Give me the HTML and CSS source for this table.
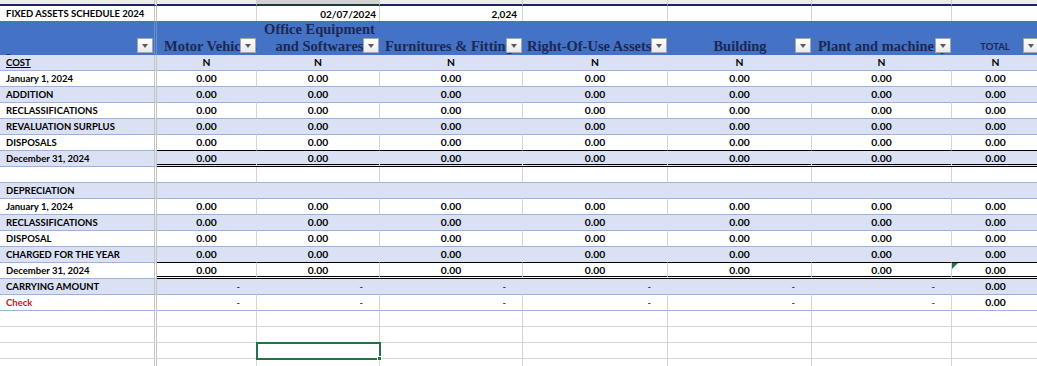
FILE: index.html
```html
<!DOCTYPE html>
<html>
<head>
<meta charset="utf-8">
<link rel="stylesheet" href="styles.css">
</head>
<body>
<div class="sheet">
  <div class="row strip">
    <div class="c"></div><div class="c"></div><div class="c sel-col"></div><div class="c"></div><div class="c"></div><div class="c"></div><div class="c"></div><div class="c"></div>
  </div>
  <div class="row titlerow">
    <div class="c lbl">FIXED ASSETS SCHEDULE 2024</div><div class="c"></div><div class="c r">02/07/2024</div><div class="c r r5">2,024</div><div class="c"></div><div class="c"></div><div class="c"></div><div class="c"></div>
  </div>
  <div class="row head">
    <div class="h hA"><span class="us">_</span><span class="dd"></span></div>
    <div class="h"><span class="ht">Motor Vehicles</span><span class="dd"></span></div>
    <div class="h hC"><span class="ht2">Office Equipment<br>and Softwares</span><span class="dd"></span></div>
    <div class="h"><span class="ht">Furnitures &amp; Fittings</span><span class="dd"></span></div>
    <div class="h hE"><span class="ht">Right-Of-Use Assets</span><span class="dd"></span></div>
    <div class="h hF"><span class="ht ctr">Building</span><span class="dd"></span></div>
    <div class="h"><span class="ht">Plant and machinery</span><span class="dd"></span></div>
    <div class="h hH"><span class="tot">TOTAL</span><span class="dd"></span></div>
  </div>

  <div class="row band"><div class="c lbl"><u>COST</u></div><div class="c n">N</div><div class="c n">N</div><div class="c n">N</div><div class="c n">N</div><div class="c n">N</div><div class="c n">N</div><div class="c n">N</div></div>
  <div class="row white"><div class="c lbl">January 1, 2024</div><div class="c n">0.00</div><div class="c n">0.00</div><div class="c n">0.00</div><div class="c n">0.00</div><div class="c n">0.00</div><div class="c n">0.00</div><div class="c n">0.00</div></div>
  <div class="row band"><div class="c lbl">ADDITION</div><div class="c n">0.00</div><div class="c n">0.00</div><div class="c n">0.00</div><div class="c n">0.00</div><div class="c n">0.00</div><div class="c n">0.00</div><div class="c n">0.00</div></div>
  <div class="row white"><div class="c lbl">RECLASSIFICATIONS</div><div class="c n">0.00</div><div class="c n">0.00</div><div class="c n">0.00</div><div class="c n">0.00</div><div class="c n">0.00</div><div class="c n">0.00</div><div class="c n">0.00</div></div>
  <div class="row band"><div class="c lbl">REVALUATION SURPLUS</div><div class="c n">0.00</div><div class="c n">0.00</div><div class="c n">0.00</div><div class="c n">0.00</div><div class="c n">0.00</div><div class="c n">0.00</div><div class="c n">0.00</div></div>
  <div class="row white pre-total"><div class="c lbl">DISPOSALS</div><div class="c n">0.00</div><div class="c n">0.00</div><div class="c n">0.00</div><div class="c n">0.00</div><div class="c n">0.00</div><div class="c n">0.00</div><div class="c n">0.00</div></div>
  <div class="row band total"><div class="c lbl">December 31, 2024</div><div class="c n">0.00</div><div class="c n">0.00</div><div class="c n">0.00</div><div class="c n">0.00</div><div class="c n">0.00</div><div class="c n">0.00</div><div class="c n">0.00</div></div>
  <div class="row white"><div class="c lbl"></div><div class="c"></div><div class="c"></div><div class="c"></div><div class="c"></div><div class="c"></div><div class="c"></div><div class="c"></div></div>

  <div class="row band"><div class="c lbl">DEPRECIATION</div><div class="c"></div><div class="c"></div><div class="c"></div><div class="c"></div><div class="c"></div><div class="c"></div><div class="c"></div></div>
  <div class="row white"><div class="c lbl">January 1, 2024</div><div class="c n">0.00</div><div class="c n">0.00</div><div class="c n">0.00</div><div class="c n">0.00</div><div class="c n">0.00</div><div class="c n">0.00</div><div class="c n">0.00</div></div>
  <div class="row band"><div class="c lbl">RECLASSIFICATIONS</div><div class="c n">0.00</div><div class="c n">0.00</div><div class="c n">0.00</div><div class="c n">0.00</div><div class="c n">0.00</div><div class="c n">0.00</div><div class="c n">0.00</div></div>
  <div class="row white"><div class="c lbl">DISPOSAL</div><div class="c n">0.00</div><div class="c n">0.00</div><div class="c n">0.00</div><div class="c n">0.00</div><div class="c n">0.00</div><div class="c n">0.00</div><div class="c n">0.00</div></div>
  <div class="row band pre-total"><div class="c lbl">CHARGED FOR THE YEAR</div><div class="c n">0.00</div><div class="c n">0.00</div><div class="c n">0.00</div><div class="c n">0.00</div><div class="c n">0.00</div><div class="c n">0.00</div><div class="c n">0.00</div></div>
  <div class="row white total"><div class="c lbl">December 31, 2024</div><div class="c n">0.00</div><div class="c n">0.00</div><div class="c n">0.00</div><div class="c n">0.00</div><div class="c n">0.00</div><div class="c n">0.00</div><div class="c n err">0.00<span class="tri"></span></div></div>
  <div class="row band"><div class="c lbl">CARRYING AMOUNT</div><div class="c d">-</div><div class="c d">-</div><div class="c d">-</div><div class="c d">-</div><div class="c d">-</div><div class="c d">-</div><div class="c n">0.00</div></div>
  <div class="row white"><div class="c lbl red">Check</div><div class="c d">-</div><div class="c d">-</div><div class="c d">-</div><div class="c d">-</div><div class="c d">-</div><div class="c d">-</div><div class="c n">0.00</div></div>

  <div class="row empty"><div class="c"></div><div class="c"></div><div class="c"></div><div class="c"></div><div class="c"></div><div class="c"></div><div class="c"></div><div class="c"></div></div>
  <div class="row empty"><div class="c"></div><div class="c"></div><div class="c"></div><div class="c"></div><div class="c"></div><div class="c"></div><div class="c"></div><div class="c"></div></div>
  <div class="row empty"><div class="c"></div><div class="c"></div><div class="c selected"><span class="handle"></span></div><div class="c"></div><div class="c"></div><div class="c"></div><div class="c"></div><div class="c"></div></div>
  <div class="row empty"><div class="c"></div><div class="c"></div><div class="c"></div><div class="c"></div><div class="c"></div><div class="c"></div><div class="c"></div><div class="c"></div></div>
</div>
</body>
</html>
```
FILE: styles.css
```css
* { box-sizing: border-box; }
html, body { margin: 0; padding: 0; background: #fff; }
body { width: 1037px; height: 366px; overflow: hidden; }

.sheet {
  width: 1040px;
  font-family: Lato, "Liberation Sans", sans-serif;
  font-weight: 700;
  font-size: 9.5px;
  color: #000;
}

.row {
  display: grid;
  grid-template-columns: 157px 100px 123px 143px 145px 144px 140px 88px;
  height: 16px;
}

.c {
  border-right: 1px solid #d4d4d4;
  border-bottom: 1px solid #9fb3da;
  white-space: nowrap;
  overflow: hidden;
  line-height: 15px;
  position: relative;
}
.row > .c:first-child { border-right: 3px double #c4c4c4; }

/* top strip */
.strip { height: 6px; }
.strip .c { background: #ececec; border-bottom: 2px solid #1e2460; border-right-color: #cfcfcf; }
.strip .sel-col { background: #d2d2d2; border-bottom-color: #1e3a40; }

.titlerow { height: 15px; }
.titlerow .c { border-bottom: none; line-height: 16px; }

.lbl { padding-left: 6px; }
.red { color: #d0121b; }
.r { text-align: right; padding-right: 3px; font-size: 10px; }
.r5 { padding-right: 5px; }
.n { text-align: center; font-size: 10.3px; }
.d { text-align: right; padding-right: 16px; font-weight: 400; }

.band .c { background: #d9e1f2; border-right-color: transparent; }
.band .c:first-child { border-right: 3px double #c4c4c4; }

.pre-total .c:not(:first-child) { border-bottom: 1px solid #000; }
.total .c:not(:first-child) { border-bottom: 3px double #000; line-height: 14px; }

.empty .c { border-bottom-color: #d4d4d4; }

/* header */
.head {
  height: 34px;
  background: #4472c4;
}
.h {
  position: relative;
  display: flex;
  align-items: flex-end;
  overflow: hidden;
  font-family: "Liberation Serif", serif;
  font-weight: 700;
  font-size: 14.5px;
  color: #1c2857;
  padding-bottom: 1px;
}
.hA { border-right: 3px double #6d8fcd; }
.ht { white-space: nowrap; padding-left: 7px; line-height: 16px; }
.hE .ht { padding-left: 4px; }
.h:nth-child(4) .ht { padding-left: 5px; }
.h:nth-child(7) .ht { padding-left: 6px; }
.hF .ht { width: 100%; text-align: center; padding-left: 0; }
.ht2 { width: 100%; text-align: center; line-height: 17px; padding-left: 2px; white-space: nowrap; margin-bottom: -1px; }
.us { padding-left: 6px; line-height: 10px; font-family: Lato, sans-serif; font-size: 10px; color: #1c2857; }
.tot {
  width: 100%;
  text-align: center;
  font-family: Lato, "Liberation Sans", sans-serif;
  font-size: 9.5px;
  line-height: 14px;
  padding-right: 2px;
}
.dd {
  position: absolute;
  right: 1px;
  bottom: 2px;
  width: 16px;
  height: 15px;
  background: linear-gradient(#ffffff, #e9e9e9);
  border: 1px solid #a6a6a6;
}
.hH .dd { right: auto; left: 71px; }
.dd::after {
  content: "";
  position: absolute;
  left: 4px;
  top: 5px;
  border-left: 3.5px solid transparent;
  border-right: 3.5px solid transparent;
  border-top: 4px solid #5b5b5b;
}

.tri {
  position: absolute;
  left: 0;
  top: 0;
  width: 0;
  height: 0;
  border-top: 6px solid #1e7a3c;
  border-right: 6px solid transparent;
}

.selected {
  outline: 2px solid #217346;
  outline-offset: -1px;
  overflow: visible;
  z-index: 2;
}
.handle {
  position: absolute;
  right: -3px;
  bottom: -3px;
  width: 5px;
  height: 5px;
  background: #217346;
  border: 1px solid #fff;
}
```
